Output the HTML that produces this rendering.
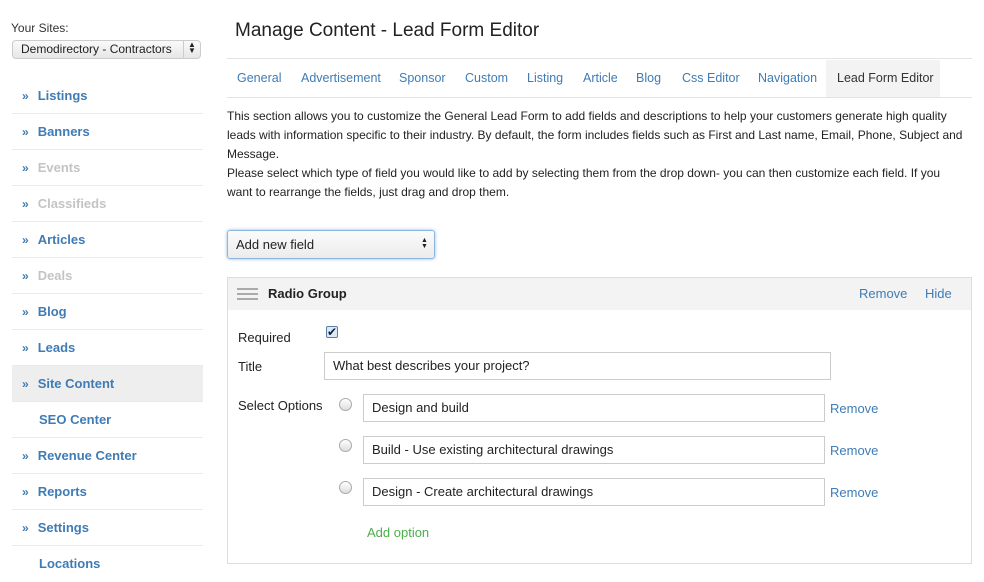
<!DOCTYPE html>
<html><head><meta charset="utf-8"><style>
*{box-sizing:border-box;margin:0;padding:0}
body{width:984px;height:575px;background:#fff;font-family:"Liberation Sans",sans-serif;font-size:12px;color:#222;position:relative;overflow:hidden}
.a{position:absolute;white-space:nowrap}
.nav{position:absolute;left:12px;width:191px;height:36px;border-bottom:1px solid #eaeaea;font-weight:bold;font-size:13px;color:#3f7cb5;line-height:36px;padding-left:10px}
.nav b{font-size:12px;margin-right:9px;color:#3f7cb5}
.nav.dis{color:#c4c4c4}
.nav.sub{padding-left:27px}
.tab{position:absolute;top:60px;height:37px;line-height:37px;color:#3f7cb5;font-size:12.5px}
.inp{position:absolute;border:1px solid #ccc;height:28px;line-height:26px;padding-left:8px;font-size:13px;color:#222;background:#fff}
.rad{position:absolute;width:13px;height:13px;border-radius:50%;border:1px solid #aaa;background:linear-gradient(#fff,#ddd)}
.lnk{position:absolute;color:#3f7cb5;font-size:13px}
</style></head><body>
<div class="a" style="left:11px;top:21px;font-size:12px;color:#333">Your Sites:</div>
<div class="a" style="left:12px;top:40px;width:189px;height:19px;border:1px solid #ccc;border-radius:4px;background:linear-gradient(#fafafa,#e6e6e6);font-size:12px;line-height:17px;padding-left:8px">Demodirectory - Contractors<span style="position:absolute;left:170px;top:0;height:17px;border-left:1px solid #ccc"></span></div>
<div class="a" style="left:188px;top:42px;font-size:8px;line-height:6px">▲<br>▼</div>
<div class="nav" style="top:78px"><b>»</b>Listings</div>
<div class="nav" style="top:114px"><b>»</b>Banners</div>
<div class="nav dis" style="top:150px"><b>»</b>Events</div>
<div class="nav dis" style="top:186px"><b>»</b>Classifieds</div>
<div class="nav" style="top:222px"><b>»</b>Articles</div>
<div class="nav dis" style="top:258px"><b>»</b>Deals</div>
<div class="nav" style="top:294px"><b>»</b>Blog</div>
<div class="nav" style="top:330px"><b>»</b>Leads</div>
<div class="nav" style="top:366px;background:#eee"><b>»</b>Site Content</div>
<div class="nav sub" style="top:402px">SEO Center</div>
<div class="nav" style="top:438px"><b>»</b>Revenue Center</div>
<div class="nav" style="top:474px"><b>»</b>Reports</div>
<div class="nav" style="top:510px"><b>»</b>Settings</div>
<div class="nav sub" style="top:546px;border:none">Locations</div>

<div class="a" style="left:235px;top:20px;font-size:19px;color:#222">Manage Content - Lead Form Editor</div>
<div class="a" style="left:227px;top:58px;width:745px;border-top:1px solid #e3e3e3"></div>
<div class="a" style="left:227px;top:97px;width:745px;border-top:1px solid #e3e3e3"></div>
<div class="tab" style="left:237px">General</div>
<div class="tab" style="left:301px">Advertisement</div>
<div class="tab" style="left:399px">Sponsor</div>
<div class="tab" style="left:465px">Custom</div>
<div class="tab" style="left:527px">Listing</div>
<div class="tab" style="left:583px">Article</div>
<div class="tab" style="left:636px">Blog</div>
<div class="tab" style="left:682px">Css Editor</div>
<div class="tab" style="left:758px">Navigation</div>
<div class="tab" style="left:826px;width:114px;background:#f3f3f3;color:#333;padding-left:11px">Lead Form Editor</div>
<div class="a" style="left:227px;top:107px;width:748px;white-space:normal;line-height:19px;font-size:12px;color:#222">This section allows you to customize the General Lead Form to add fields and descriptions to help your customers generate high quality leads with information specific to their industry. By default, the form includes fields such as First and Last name, Email, Phone, Subject and Message.<br>Please select which type of field you would like to add by selecting them from the drop down- you can then customize each field. If you<br>want to rearrange the fields, just drag and drop them.</div>

<div class="a" style="left:227px;top:230px;width:208px;height:29px;border:1px solid #8fb6e0;box-shadow:0 0 3px #8fb6e0;border-radius:3px;background:linear-gradient(#fbfbfb,#ececec);font-size:13px;line-height:27px;padding-left:8px">Add new field</div>
<div class="a" style="left:421px;top:238px;font-size:7px;line-height:6px">▲<br>▼</div>

<div class="a" style="left:227px;top:277px;width:745px;height:287px;border:1px solid #ddd"></div>
<div class="a" style="left:228px;top:278px;width:743px;height:32px;background:#f3f3f3"></div>
<div class="a" style="left:237px;top:288px;width:21px;height:12px;border-top:2px solid #aaa;border-bottom:2px solid #aaa"></div>
<div class="a" style="left:237px;top:293px;width:21px;border-top:2px solid #aaa"></div>
<div class="a" style="left:268px;top:286px;font-weight:bold;font-size:13px">Radio Group</div>
<div class="lnk" style="left:859px;top:286px">Remove</div>
<div class="lnk" style="left:925px;top:286px">Hide</div>

<div class="a" style="left:238px;top:330px;font-size:13px">Required</div>
<div class="a" style="left:326px;top:326px;width:12px;height:12px;border:1px solid #5b7fa8;border-radius:2px;background:#dbe8f6;font-size:12px;line-height:10px;color:#123">✔</div>
<div class="a" style="left:238px;top:359px;font-size:13px">Title</div>
<div class="inp" style="left:324px;top:352px;width:507px">What best describes your project?</div>
<div class="a" style="left:238px;top:398px;font-size:13px">Select Options</div>
<div class="rad" style="left:339px;top:398px"></div>
<div class="inp" style="left:363px;top:394px;width:462px">Design and build</div>
<div class="lnk" style="left:830px;top:401px">Remove</div>
<div class="rad" style="left:339px;top:439px"></div>
<div class="inp" style="left:363px;top:436px;width:462px">Build - Use existing architectural drawings</div>
<div class="lnk" style="left:830px;top:443px">Remove</div>
<div class="rad" style="left:339px;top:481px"></div>
<div class="inp" style="left:363px;top:478px;width:462px">Design - Create architectural drawings</div>
<div class="lnk" style="left:830px;top:485px">Remove</div>
<div class="a" style="left:367px;top:525px;font-size:13px;color:#4cae4c">Add option</div>
</body></html>
